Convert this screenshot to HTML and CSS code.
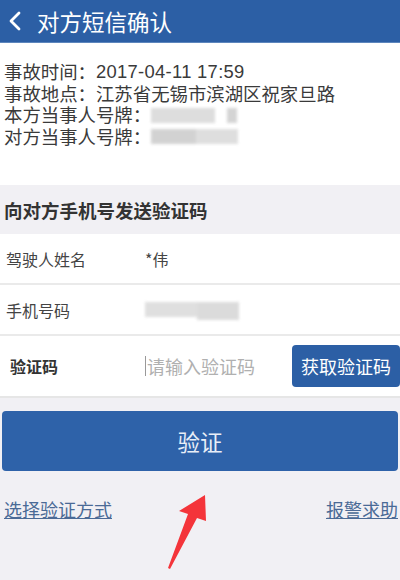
FILE: index.html
```html
<!DOCTYPE html>
<html lang="zh">
<head>
<meta charset="utf-8">
<link rel="stylesheet" href="styles.css">
</head>
<body>
<div class="page">
  <header class="topbar">
    <svg class="back" width="16" height="20" viewBox="0 0 16 20"><path d="M12 2 L4 10 L12 18" fill="none" stroke="#fff" stroke-width="2.8" stroke-linecap="round" stroke-linejoin="round"/></svg>
    <span class="title">对方短信确认</span>
  </header>
  <section class="info">
    <div class="line">事故时间：<span class="num">2017-04-11 17:59</span></div>
    <div class="line">事故地点：江苏省无锡市滨湖区祝家旦路</div>
    <div class="line">本方当事人号牌：<span class="blur b1"><i></i><i></i></span></div>
    <div class="line">对方当事人号牌：<span class="blur b2"><i></i><i></i></span></div>
  </section>
  <div class="sechead">向对方手机号发送验证码</div>
  <div class="row">
    <span class="label">驾驶人姓名</span>
    <span class="value">*伟</span>
  </div>
  <div class="row">
    <span class="label">手机号码</span>
    <span class="value"><span class="blur b3"><i></i><i></i></span></span>
  </div>
  <div class="row coderow">
    <span class="label bold">验证码</span>
    <span class="value placeholder"><span class="caret"></span>请输入验证码</span>
    <button class="getcode">获取验证码</button>
  </div>
  <button class="verify">验证</button>
  <div class="links">
    <a class="link">选择验证方式</a>
    <a class="link">报警求助</a>
  </div>
  <svg class="arrow" width="60" height="90" viewBox="0 0 60 90"><path d="M55 2 L56 28 L47 25 L20 76 L18 75 L38 21 L29 18 Z" fill="#f4343a"/></svg>
</div>
</body>
</html>
```
FILE: styles.css
```css
* { box-sizing: border-box; }
html, body { margin: 0; padding: 0; }
body {
  width: 400px;
  height: 580px;
  background: #f1f0f4;
  font-family: "Noto Sans CJK SC", "Liberation Sans", sans-serif;
  color: #333;
  overflow: hidden;
  text-spacing-trim: space-all;
}
.page { position: relative; height: 580px; }
.topbar {
  height: 43px;
  background: #2c5fa5;
  display: flex;
  align-items: center;
  padding-left: 7px;
  gap: 14px;
  border-bottom: 1px solid #5d86bd;
}
.title { color: #fff; font-size: 22.5px; }
.info {
  background: #fff;
  padding: 18px 4px 0;
  height: 142px;
}
.line {
  font-size: 18.4px;
  line-height: 21.7px;
  color: #3a3a3a;
  display: flex;
  align-items: center;
}
.num { font-family: "Liberation Sans", sans-serif; letter-spacing: 0.3px; }
.blur { display: inline-flex; height: 15px; filter: blur(1.5px); opacity: 0.75; }
.blur i { display: block; height: 15px; background: #c9c9c9; }
.b1 { width: 86px; justify-content: space-between; }
.b1 i:first-child { width: 64px; background: #d2d2d2; }
.b1 i:last-child { width: 10px; background: #c6c6c6; }
.b2 i:first-child { width: 45px; background: #c4c4c4; }
.b2 i:last-child { width: 42px; background: #d4d4d4; }
.b3 i:first-child { width: 52px; background: #d5d5d5; }
.b3 i:last-child { width: 42px; background: #d0d0d0; height: 18px; }
.sechead {
  height: 49px;
  display: flex;
  align-items: center;
  padding: 0 4px;
  font-size: 18.5px;
  font-weight: bold;
  color: #333;
  background: #f1f0f4;
}
.row {
  background: #fff;
  height: 51px;
  display: flex;
  align-items: center;
  padding-left: 6px;
  border-bottom: 2px solid #eaeaea;
}
.label { width: 139px; font-size: 16px; color: #444; }
.label.bold { font-weight: bold; color: #333; padding-left: 4px; }
.value { font-size: 16px; color: #444; flex: 1; }
.coderow { height: 62px; border-bottom: 2px solid #e6e6e6; }
.placeholder { color: #b0b0b0; font-size: 18px; display: flex; align-items: center; }
.caret { width: 1px; height: 20px; background: #999; margin-right: 1px; }
.getcode {
  width: 108px;
  height: 42px;
  background: #2c5fa5;
  color: #fff;
  border: none;
  border-radius: 4px;
  font-family: inherit;
  font-size: 18px;
  padding: 0;
}
.verify {
  display: block;
  margin: 13px 2px 0;
  width: 396px;
  height: 60px;
  background: #2e62a9;
  color: #e8eef8;
  border: none;
  border-radius: 4px;
  font-family: inherit;
  font-size: 22.5px;
}
.links {
  display: flex;
  justify-content: space-between;
  padding: 25px 2px 0 4px;
}
.link {
  font-size: 18px;
  color: #4a6a96;
  text-decoration: underline;
}
.arrow { position: absolute; left: 150px; top: 493px; }
```
